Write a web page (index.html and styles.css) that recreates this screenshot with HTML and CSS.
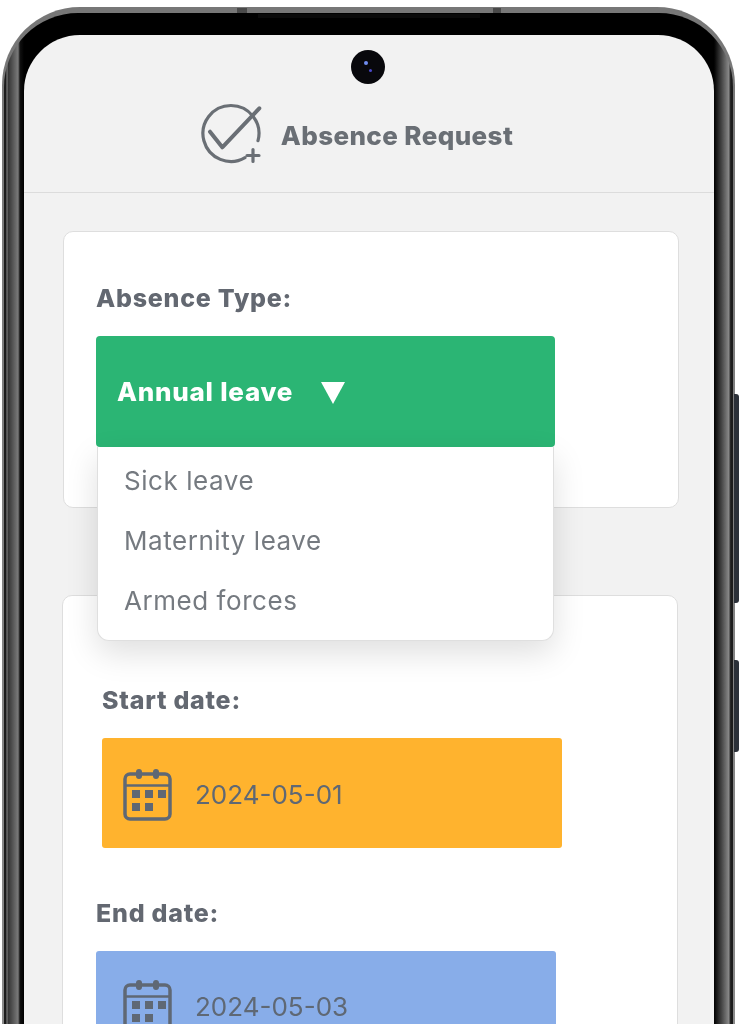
FILE: index.html
```html
<!DOCTYPE html>
<html lang="en">
<head>
<meta charset="utf-8">
<title>Absence Request</title>
<link rel="stylesheet" href="styles.css">
</head>
<body>
<div class="phone">
  <span class="side-btn side-btn-a"></span>
  <span class="side-btn side-btn-b"></span>
  <span class="seam seam-a"></span>
  <span class="seam seam-b"></span>
  <span class="speaker"></span>
  <div class="edge">
    <div class="bezel">
      <div class="screen">
        <span class="camera"><i class="lens lens-a"></i><i class="lens lens-b"></i></span>
        <header class="app-header">
          <svg class="logo" viewBox="0 0 60 60" fill="none" stroke="#6a6f75" stroke-width="3.2" stroke-linecap="round" stroke-linejoin="round">
            <path d="M57 34.700 A28 28 0 1 0 44 51.700"/>
            <path d="M9 25.700 L21.300 41.300 L58.300 2.300" stroke-width="4"/>
            <path d="M52 43.500 V55.500 M46 49.500 H58"/>
          </svg>
          <h1 class="app-title">Absence Request</h1>
        </header>
        <main class="content">
          <section class="card card-type">
            <h2 class="label">Absence Type:</h2>
            <div class="dropdown">
              <div class="dropdown-head"><span>Annual leave</span><i class="caret"></i></div>
              <ul class="dropdown-list">
                <li>Sick leave</li>
                <li>Maternity leave</li>
                <li>Armed forces</li>
              </ul>
            </div>
          </section>
          <section class="card card-dates">
            <div class="field field-start">
              <h2 class="label">Start date:</h2>
              <div class="date-box date-orange">
                <svg class="cal" viewBox="0 0 50 54"><use href="#cal-icon"/></svg>
                <span>2024-05-01</span>
              </div>
            </div>
            <div class="field field-end">
              <h2 class="label">End date:</h2>
              <div class="date-box date-blue">
                <svg class="cal" viewBox="0 0 50 54"><use href="#cal-icon"/></svg>
                <span>2024-05-03</span>
              </div>
            </div>
          </section>
        </main>
      </div>
    </div>
  </div>
</div>
<svg class="defs" width="0" height="0">
  <symbol id="cal-icon" viewBox="0 0 50 54">
    <rect x="2" y="6" width="45" height="45" rx="5" fill="none" stroke="#5f6874" stroke-width="3.500"/>
    <path d="M2 17.500 H47" stroke="#5f6874" stroke-width="2.500"/>
    <rect x="13" y="1" width="6" height="10" rx="3" fill="#5f6874"/>
    <rect x="30" y="1" width="6" height="10" rx="3" fill="#5f6874"/>
    <g fill="#5f6874">
      <rect x="9" y="22" width="8" height="8"/><rect x="22" y="22" width="8" height="8"/><rect x="35" y="22" width="8" height="8"/>
      <rect x="9" y="35" width="8" height="8"/><rect x="22" y="35" width="8" height="8"/>
    </g>
  </symbol>
</svg>
</body>
</html>
```
FILE: styles.css
```css
html, body {
  margin: 0;
  height: 1024px;
  overflow: hidden;
  background: #fff;
  font-family: "Inter", "Noto Sans", sans-serif;
}
.defs { position: absolute; }
.phone {
  position: relative;
  width: 733px;
  height: 1200px;
  margin: 7px 0 0 2px;
  filter: blur(0.45px);
}
.side-btn {
  position: absolute;
  left: 732px;
  width: 5px;
  background: #2b3038;
  border-radius: 0 3px 3px 0;
}
.side-btn-a { top: 387px; height: 209px; }
.side-btn-b { top: 653px; height: 92px; }
.seam {
  position: absolute;
  z-index: 2;
  top: 1px;
  height: 5px;
  background: #4a4a4a;
}
.seam-a { left: 235px; width: 10px; }
.seam-b { left: 491px; width: 8px; }
.speaker {
  position: absolute;
  z-index: 2;
  top: 7px;
  left: 256px;
  width: 222px;
  height: 4px;
  background: #0a0a0a;
}
.edge {
  height: 100%;
  box-sizing: border-box;
  padding: 6px 2px 0 2px;
  border-radius: 78px 78px 0 0;
  background: linear-gradient(180deg, #777 0, #8e8e8e 100%);
}
.bezel {
  height: 100%;
  box-sizing: border-box;
  padding: 22px 19px 0 20px;
  border-radius: 74px 74px 0 0;
  background:
    linear-gradient(90deg,
      #1c1c1c 0, #1c1c1c 2px, #8a8a8a 3px, #333 4px, #7a7a7a 14px, #111 16px, #000 20px,
      #000 calc(100% - 19px), #111 calc(100% - 17px), #8a8a8a calc(100% - 4px), #333 calc(100% - 3px), #1c1c1c calc(100% - 2px), #1c1c1c 100%);
}
.screen {
  position: relative;
  height: 100%;
  border-radius: 56px 56px 0 0;
  background: #f2f2f2;
  overflow: hidden;
}
.camera {
  position: absolute;
  top: 15px;
  left: 327px;
  width: 34px;
  height: 34px;
  border-radius: 50%;
  background: #08080c;
}
.lens { position: absolute; border-radius: 50%; background: #6f8cf0; }
.lens-a { left: 13px; top: 11px; width: 4px; height: 4px; }
.lens-b { left: 18px; top: 19px; width: 3px; height: 3px; background: #4a48c8; }
.app-header {
  display: flex;
  align-items: center;
  justify-content: center;
  gap: 20px;
  height: 158px;
  padding: 45px 24px 0 0;
  box-sizing: border-box;
  border-bottom: 1.5px solid #dcdcdc;
}
.logo { width: 60px; height: 60px; flex: none; overflow: visible; }
.app-title {
  margin: 0;
  font-size: 26px;
  font-weight: 800;
  color: #6a6f75;
  letter-spacing: 0.4px;
  line-height: 30px;
  white-space: nowrap;
}
.content {
  padding: 38px 35px 0 39px;
  display: flex;
  flex-direction: column;
  gap: 87px;
}
.card {
  position: relative;
  background: #fff;
  border: 1.5px solid #dedede;
  border-radius: 10px;
  box-sizing: border-box;
}
.card-type {
  height: 277px;
  padding: 51px 32px 0;
}
.card-dates {
  margin-left: -1px;
  margin-right: 1px;
  height: 600px;
  padding-top: 89px;
}
.label {
  margin: 0;
  font-size: 25px;
  line-height: 30px;
  font-weight: 800;
  color: #636871;
  letter-spacing: 0.75px;
}
.dropdown {
  position: absolute;
  z-index: 3;
  top: 104px;
  left: 32px;
  width: 459px;
}
.dropdown-head {
  display: flex;
  align-items: center;
  gap: 28px;
  height: 111px;
  padding-left: 21px;
  box-sizing: border-box;
  background: #2bb574;
  border-radius: 4px;
  color: #fff;
  font-size: 26px;
  font-weight: 800;
  letter-spacing: 0.75px;
}
.caret {
  width: 0;
  height: 0;
  margin-top: 2px;
  border-left: 12px solid transparent;
  border-right: 12px solid transparent;
  border-top: 22px solid #fff;
}
.dropdown-list {
  list-style: none;
  margin: 0 1px 0 1px;
  padding: 4px 0 9px 26px;
  background: #fff;
  border: 1px solid #dfdfdf;
  border-top: 0;
  border-radius: 0 0 12px 12px;
  box-shadow: 0 12px 32px rgba(0, 0, 0, 0.13);
  color: #757a80;
  font-size: 26px;
  letter-spacing: 0.55px;
  line-height: 60px;
}
.field-start { margin-left: 39px; }
.field-end { margin: 50px 0 0 33px; }
.date-box {
  display: flex;
  align-items: center;
  gap: 22px;
  width: 460px;
  height: 110px;
  margin-top: 23px;
  padding: 3px 0 0 21px;
  box-sizing: border-box;
  border-radius: 3px;
  color: #5f6874;
  font-size: 26px;
}
.date-orange { background: #ffb32e; }
.date-blue { background: #88ade9; padding: 0 0 0 27px; }
.cal { width: 50px; height: 54px; flex: none; }
```
